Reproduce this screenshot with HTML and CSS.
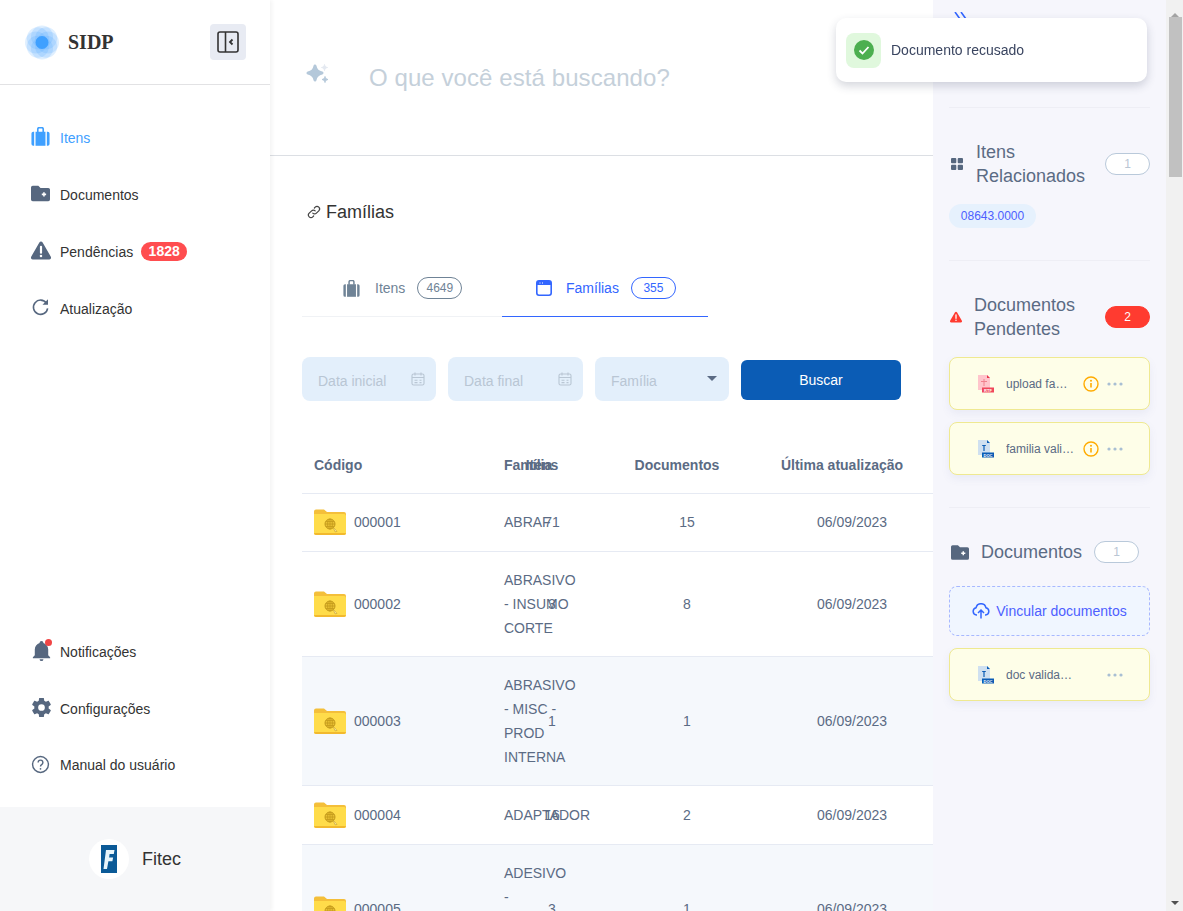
FILE: index.html
```html
<!DOCTYPE html>
<html lang="pt-BR">
<head>
    <meta charset="UTF-8">
    <meta name="viewport" content="width=device-width, initial-scale=1.0">
    <title>SIDP</title>
    <link rel="stylesheet" href="styles.css">
</head>
<body>
    <svg class="sprite" aria-hidden="true">
        <symbol id="i-bag" viewBox="1.5 1.5 21 20.5">
            <path d="M6.500 6.500h11V22h-11z" fill="currentColor"/>
            <path d="M2 8.500a2 2 0 0 1 2-2h1V22H4a2 2 0 0 1-2-2zM22 8.500a2 2 0 0 0-2-2h-1V22h1a2 2 0 0 0 2-2z" fill="currentColor"/>
            <path d="M9 7V3.500a1.500 1.500 0 0 1 1.500-1.500h3A1.500 1.500 0 0 1 15 3.500V7" fill="none" stroke="currentColor" stroke-width="1.800"/>
        </symbol>
        <symbol id="i-folder-plus" viewBox="1 3 22 18">
            <path d="M3 3h6.500l2.500 2.500h9a2 2 0 0 1 2 2V19a2 2 0 0 1-2 2H3a2 2 0 0 1-2-2V5a2 2 0 0 1 2-2z" fill="currentColor"/>
            <path d="M13.500 13h5M16 10.500v5" stroke="#fff" stroke-width="1.800"/>
        </symbol>
        <symbol id="i-warning" viewBox="1 2 22 20">
            <path d="M10.200 3.200a2.100 2.100 0 0 1 3.600 0l9 15.600a2.100 2.100 0 0 1-1.800 3.200H3a2.100 2.100 0 0 1-1.800-3.200z" fill="currentColor"/>
            <path d="M12 8v6.500" stroke="#fff" stroke-width="2.400" stroke-linecap="round"/>
            <circle cx="12" cy="18" r="1.400" fill="#fff"/>
        </symbol>
        <symbol id="i-folder" viewBox="0 0 32 26">
            <path d="M0 2.500A2 2 0 0 1 2 .5h8l3 2.500h17a2 2 0 0 1 2 2V10H0z" fill="#f4bf3a"/>
            <path d="M0 5h30a2 2 0 0 1 2 2v17a2 2 0 0 1-2 2H2a2 2 0 0 1-2-2z" fill="#ffdc4a"/>
            <path d="M0 24h32a2 2 0 0 1-2 2H2a2 2 0 0 1-2-2z" fill="#f2b92e"/>
            <circle cx="16" cy="15" r="5" fill="#eac233" stroke="#c49a1c" stroke-width="1"/>
            <path d="M11 15h10M16 10v10M12 12.500h8M12 17.500h8" stroke="#c49a1c" stroke-width=".8"/>
            <ellipse cx="16" cy="15" rx="2.400" ry="5" fill="none" stroke="#c49a1c" stroke-width=".8"/>
            <path d="M19 18l4 4.500-2 .3z" fill="#fff3b8" stroke="#c49a1c" stroke-width=".6"/>
        </symbol>
        <symbol id="i-calendar" viewBox="0 0 14 14">
            <rect x="1" y="2" width="12" height="11" rx="1.600" fill="none" stroke="currentColor" stroke-width="1.100"/>
            <path d="M1 5.500h12M4 .5v3M10 .5v3M3.500 8.200h3M8.500 8.200h2M3.500 10.600h3M8.500 10.600h2" stroke="currentColor" stroke-width="1.100" fill="none"/>
        </symbol>
        <symbol id="i-info" viewBox="0 0 16 16">
            <circle cx="8" cy="8" r="7" fill="none" stroke="#ffab00" stroke-width="1.400"/>
            <path d="M8 7v4.600" stroke="#ffab00" stroke-width="1.600"/>
            <circle cx="8" cy="4.800" r="1" fill="#ffab00"/>
        </symbol>
        <symbol id="i-dots" viewBox="0 0 16 4">
            <circle cx="2" cy="2" r="1.600" fill="#a9bfd3"/>
            <circle cx="8" cy="2" r="1.600" fill="#a9bfd3"/>
            <circle cx="14" cy="2" r="1.600" fill="#a9bfd3"/>
        </symbol>
    </svg>

    <div class="shell">
        <aside class="sidebar">
            <div class="brand">
                <svg class="brand-logo" viewBox="0 0 34 34">
                    <g fill="#3fa0ff" fill-opacity=".17">
                        <circle cx="17" cy="11" r="11"/>
                        <circle cx="17" cy="23" r="11"/>
                        <circle cx="11" cy="17" r="11"/>
                        <circle cx="23" cy="17" r="11"/>
                        <circle cx="12.800" cy="12.800" r="11"/>
                        <circle cx="21.200" cy="12.800" r="11"/>
                        <circle cx="12.800" cy="21.200" r="11"/>
                        <circle cx="21.200" cy="21.200" r="11"/>
                    </g>
                    <circle cx="17" cy="17" r="6.500" fill="#3fa0ff"/>
                </svg>
                <span class="brand-name">SIDP</span>
                <button class="collapse-btn" aria-label="Recolher menu">
                    <svg width="22" height="22" viewBox="0 0 22 22" fill="none" stroke="#333" stroke-width="1.600">
                        <rect x="1" y="1" width="20" height="20" rx="2"/>
                        <path d="M8.500 1v20"/>
                        <path d="M15.500 8.500L13 11l2.500 2.500" stroke-width="1.800"/>
                    </svg>
                </button>
            </div>

            <nav class="nav">
                <a class="nav-item active">
                    <svg class="nav-icon"><use href="#i-bag"/></svg>
                    Itens
                </a>
                <a class="nav-item">
                    <svg class="nav-icon"><use href="#i-folder-plus"/></svg>
                    Documentos
                </a>
                <a class="nav-item">
                    <svg class="nav-icon nav-icon-warn"><use href="#i-warning"/></svg>
                    Pendências
                    <span class="nav-badge">1828</span>
                </a>
                <a class="nav-item">
                    <svg class="nav-icon" viewBox="0 0 24 24" fill="none" stroke="currentColor" stroke-width="2">
                        <path d="M19.500 6.500A9 9 0 1 0 21 13"/>
                        <path d="M21.500 1.500v7h-7" fill="currentColor" stroke="none"/>
                    </svg>
                    Atualização
                </a>
            </nav>

            <nav class="nav nav-bottom">
                <a class="nav-item">
                    <span class="bell">
                        <svg class="nav-icon nav-icon-lg" viewBox="0 0 24 24"><path fill="currentColor" d="M21,19V20H3V19L5,17V11C5,7.9 7.03,5.17 10,4.29C10,4.19 10,4.1 10,4A2,2 0 0,1 12,2A2,2 0 0,1 14,4C14,4.1 14,4.19 14,4.29C16.97,5.17 19,7.9 19,11V17L21,19M14,21A2,2 0 0,1 12,23A2,2 0 0,1 10,21"/></svg>
                        <span class="bell-dot"></span>
                    </span>
                    Notificações
                </a>
                <a class="nav-item">
                    <svg class="nav-icon nav-icon-lg" viewBox="0 0 24 24"><path fill="currentColor" d="M12,15.5A3.5,3.5 0 0,1 8.5,12A3.5,3.5 0 0,1 12,8.5A3.5,3.5 0 0,1 15.5,12A3.5,3.5 0 0,1 12,15.5M19.43,12.97C19.47,12.65 19.5,12.33 19.5,12C19.5,11.67 19.47,11.34 19.43,11L21.54,9.37C21.73,9.22 21.78,8.95 21.66,8.73L19.66,5.27C19.54,5.05 19.27,4.96 19.05,5.05L16.56,6.05C16.04,5.66 15.5,5.32 14.87,5.07L14.5,2.42C14.46,2.18 14.25,2 14,2H10C9.75,2 9.54,2.18 9.5,2.42L9.13,5.07C8.5,5.32 7.96,5.66 7.44,6.05L4.95,5.05C4.73,4.96 4.46,5.05 4.34,5.27L2.34,8.73C2.21,8.95 2.27,9.22 2.46,9.37L4.57,11C4.53,11.34 4.5,11.67 4.5,12C4.5,12.33 4.53,12.65 4.57,12.97L2.46,14.63C2.27,14.78 2.21,15.05 2.34,15.27L4.34,18.73C4.46,18.95 4.73,19.03 4.95,18.95L7.44,17.94C7.96,18.34 8.5,18.68 9.13,18.93L9.5,21.58C9.54,21.82 9.75,22 10,22H14C14.25,22 14.46,21.82 14.5,21.58L14.87,18.93C15.5,18.67 16.04,18.34 16.56,17.94L19.05,18.95C19.27,19.03 19.54,18.95 19.66,18.73L21.66,15.27C21.78,15.05 21.73,14.78 21.54,14.63L19.43,12.97Z"/></svg>
                    Configurações
                </a>
                <a class="nav-item nav-item-last">
                    <svg class="nav-icon" viewBox="0 0 24 24" fill="none" stroke="currentColor" stroke-width="1.800">
                        <circle cx="12" cy="12" r="10"/>
                        <path d="M9 9.500a3 3 0 1 1 4.500 2.600c-1 .6-1.500 1.100-1.500 2.400"/>
                        <circle cx="12" cy="17.500" r="1.100" fill="currentColor" stroke="none"/>
                    </svg>
                    Manual do usuário
                </a>
            </nav>

            <div class="org">
                <span class="org-logo">
                    <svg width="16" height="28" viewBox="0 0 16 28">
                        <rect width="16" height="28" fill="#0b5a97"/>
                        <path d="M5 5h8.500l-.7 4H8.600l-.5 3.500h4l-.7 3.700h-4L6 24H2.500z" fill="#e8f5fb"/>
                    </svg>
                </span>
                <span class="org-name">Fitec</span>
            </div>
        </aside>

        <main class="main">
            <div class="search">
                <svg class="search-icon" viewBox="0 0 26 22">
                    <path d="M9 2c.8 4.300 2.700 6.200 7 7-4.300.8-6.200 2.700-7 7-.8-4.300-2.700-6.200-7-7 4.300-.8 6.200-2.700 7-7z" fill="#b4c8da" stroke="#b4c8da" stroke-width="3" stroke-linejoin="round"/>
                    <path d="M18.500 .5c.3 1.800 1.200 2.700 3 3-1.800.3-2.700 1.200-3 3-.3-1.800-1.200-2.700-3-3 1.800-.3 2.700-1.200 3-3z" fill="#e4e9f1" stroke="#e4e9f1"/>
                    <path d="M19 12.500c.3 1.800 1.200 2.700 3 3-1.800.3-2.700 1.200-3 3-.3-1.800-1.200-2.700-3-3 1.800-.3 2.700-1.200 3-3z" fill="#b4c8da" stroke="#b4c8da"/>
                </svg>
                <span class="search-text">O que você está buscando?</span>
            </div>

            <div class="content">
                <h2 class="page-title">
                    <svg width="14" height="14" viewBox="0 0 14 14" fill="none" stroke="#444" stroke-width="1.200" stroke-linecap="round">
                        <path d="M5.800 8.200a2.500 2.500 0 0 0 3.600 0l2.400-2.400a2.500 2.500 0 0 0-3.600-3.600l-.8.8"/>
                        <path d="M8.200 5.800a2.500 2.500 0 0 0-3.600 0L2.200 8.200a2.500 2.500 0 0 0 3.600 3.600l.8-.8"/>
                    </svg>
                    Famílias
                </h2>

                <div class="tabs">
                    <div class="tab">
                        <svg class="tab-icon"><use href="#i-bag"/></svg>
                        Itens
                        <span class="tab-count">4649</span>
                    </div>
                    <div class="tab tab-active">
                        <svg class="tab-icon" viewBox="0 0 16 16">
                            <rect x=".8" y=".8" width="14.400" height="14.400" rx="2.200" fill="#fff" stroke="currentColor" stroke-width="1.600"/>
                            <path d="M1 2.500a1.500 1.500 0 0 1 1.500-1.500h11A1.500 1.500 0 0 1 15 2.500V5H1z" fill="currentColor"/>
                            <path d="M3.500 3h1M6 3h1" stroke="#fff"/>
                        </svg>
                        Famílias
                        <span class="tab-count">355</span>
                    </div>
                </div>

                <div class="filters">
                    <div class="field">
                        Data inicial
                        <svg class="field-icon"><use href="#i-calendar"/></svg>
                    </div>
                    <div class="field field-final">
                        Data final
                        <svg class="field-icon"><use href="#i-calendar"/></svg>
                    </div>
                    <div class="field">
                        Família
                        <span class="caret"></span>
                    </div>
                    <button class="search-btn">Buscar</button>
                </div>

                <div class="table">
                    <div class="row row-head">
                        <div class="cell-code">Código</div>
                        <div class="cell-family">Família</div>
                        <div class="cell-center cell-items">Itens</div>
                        <div class="cell-center">Documentos</div>
                        <div class="cell-center cell-last">Última atualização</div>
                    </div>
                    <div class="row">
                        <div class="cell-code"><svg class="folder"><use href="#i-folder"/></svg>000001</div>
                        <div class="cell-family">ABRAF</div>
                        <div class="cell-center cell-items">71</div>
                        <div class="cell-center">15</div>
                        <div class="cell-center">06/09/2023</div>
                    </div>
                    <div class="row">
                        <div class="cell-code"><svg class="folder"><use href="#i-folder"/></svg>000002</div>
                        <div class="cell-family">ABRASIVO - INSUMO CORTE</div>
                        <div class="cell-center cell-items">3</div>
                        <div class="cell-center">8</div>
                        <div class="cell-center">06/09/2023</div>
                    </div>
                    <div class="row row-alt">
                        <div class="cell-code"><svg class="folder"><use href="#i-folder"/></svg>000003</div>
                        <div class="cell-family">ABRASIVO - MISC - PROD INTERNA</div>
                        <div class="cell-center cell-items">1</div>
                        <div class="cell-center">1</div>
                        <div class="cell-center">06/09/2023</div>
                    </div>
                    <div class="row">
                        <div class="cell-code"><svg class="folder"><use href="#i-folder"/></svg>000004</div>
                        <div class="cell-family">ADAPTADOR</div>
                        <div class="cell-center cell-items">16</div>
                        <div class="cell-center">2</div>
                        <div class="cell-center">06/09/2023</div>
                    </div>
                    <div class="row row-alt">
                        <div class="cell-code"><svg class="folder"><use href="#i-folder"/></svg>000005</div>
                        <div class="cell-family">ADESIVO - CONSTRUCAO CIVIL</div>
                        <div class="cell-center cell-items">3</div>
                        <div class="cell-center">1</div>
                        <div class="cell-center">06/09/2023</div>
                    </div>
                </div>
            </div>
        </main>

        <aside class="panel">
            <div class="panel-top">
                <svg width="14" height="14" viewBox="0 0 14 14" fill="none" stroke="#3366ff" stroke-width="1.600">
                    <path d="M1 0l5 7-5 7M7 0l5 7-5 7"/>
                </svg>
            </div>

            <section class="panel-section">
                <div class="panel-head">
                    <svg class="head-icon-grid" viewBox="0 0 12 12" fill="#56677f">
                        <rect width="5.300" height="5.300" rx="1"/>
                        <rect x="6.700" width="5.300" height="5.300" rx="1"/>
                        <rect y="6.700" width="5.300" height="5.300" rx="1"/>
                        <rect x="6.700" y="6.700" width="5.300" height="5.300" rx="1"/>
                    </svg>
                    <span class="panel-title">Itens Relacionados</span>
                    <span class="count">1</span>
                </div>
                <span class="chip">08643.0000</span>
            </section>

            <section class="panel-section">
                <div class="panel-head">
                    <svg class="head-icon-warn"><use href="#i-warning"/></svg>
                    <span class="panel-title">Documentos Pendentes</span>
                    <span class="count count-red">2</span>
                </div>
                <div class="doc-list">
                    <div class="doc">
                        <svg class="doc-icon" viewBox="0 0 17 18">
                            <path d="M1 0h9l3 3v12H1z" fill="#ffc5cc"/>
                            <path d="M10 0l3 3h-3z" fill="#e8344a"/>
                            <path d="M7 4v7M4 6.500h6" stroke="#f0808e" stroke-width="1"/>
                            <rect x="5" y="12.500" width="12" height="5" fill="#f0475c"/>
                            <text x="11" y="16.500" class="doc-ext">RTF</text>
                        </svg>
                        <span class="doc-name">upload familia rtf</span>
                        <svg class="doc-info"><use href="#i-info"/></svg>
                        <svg class="doc-dots"><use href="#i-dots"/></svg>
                    </div>
                    <div class="doc">
                        <svg class="doc-icon" viewBox="0 0 17 18">
                            <path d="M1 0h9l3 3v12H1z" fill="#cfe0f0"/>
                            <path d="M10 0l3 3h-3z" fill="#0b5cb5"/>
                            <path d="M7 5.500V11M5.200 5.500h3.600" stroke="#0b5cb5" stroke-width="1.200"/>
                            <rect x="5" y="12.500" width="12" height="5" fill="#0b5cb5"/>
                            <text x="11" y="16.500" class="doc-ext">DOC</text>
                        </svg>
                        <span class="doc-name doc-name-wide">familia validacao</span>
                        <svg class="doc-info"><use href="#i-info"/></svg>
                        <svg class="doc-dots"><use href="#i-dots"/></svg>
                    </div>
                </div>
            </section>

            <section class="panel-section panel-section-last">
                <div class="panel-head panel-head-docs">
                    <svg class="head-icon-folder"><use href="#i-folder-plus"/></svg>
                    <span class="panel-title panel-title-inline">Documentos</span>
                    <span class="count">1</span>
                </div>
                <div class="upload">
                    <svg width="18" height="16" viewBox="0 0 18 16" fill="none" stroke="#3366ff" stroke-width="1.500">
                        <path d="M5 12H4.500a3.700 3.700 0 0 1-.4-7.300 5 5 0 0 1 9.800 0A3.700 3.700 0 0 1 13.500 12H13"/>
                        <path d="M9 15.500V7.500M6 10l3-3 3 3"/>
                    </svg>
                    Vincular documentos
                </div>
                <div class="doc">
                    <svg class="doc-icon" viewBox="0 0 17 18">
                        <path d="M1 0h9l3 3v12H1z" fill="#cfe0f0"/>
                        <path d="M10 0l3 3h-3z" fill="#0b5cb5"/>
                        <path d="M7 5.500V11M5.200 5.500h3.600" stroke="#0b5cb5" stroke-width="1.200"/>
                        <rect x="5" y="12.500" width="12" height="5" fill="#0b5cb5"/>
                        <text x="11" y="16.500" class="doc-ext">DOC</text>
                    </svg>
                    <span class="doc-name doc-name-wide">doc validacao final</span>
                    <svg class="doc-info"></svg>
                    <svg class="doc-dots"><use href="#i-dots"/></svg>
                </div>
            </section>
        </aside>

        <div class="scrollbar" aria-hidden="true">
            <span class="scroll-arrow"></span>
            <span class="scroll-thumb"></span>
            <span class="scroll-arrow scroll-arrow-down"></span>
        </div>
    </div>

    <div class="toast">
        <span class="toast-icon">
            <svg width="20" height="20" viewBox="0 0 20 20">
                <circle cx="10" cy="10" r="10" fill="#4caf50"/>
                <path d="M5.500 10.500l3 3 6-6.500" fill="none" stroke="#fff" stroke-width="1.800"/>
            </svg>
        </span>
        Documento recusado
    </div>
</body>
</html>
```

FILE: styles.css
```css
* {
    box-sizing: border-box;
}
html, body {
    margin: 0;
    height: 100%;
}
body {
    font-family: "Liberation Sans", Arial, sans-serif;
    font-size: 14px;
    color: #5b6b84;
    background: #fff;
    overflow: hidden;
}
.sprite {
    display: none;
}
.shell {
    display: flex;
    height: 100vh;
    overflow: hidden;
}

/* menu lateral */
.sidebar {
    width: 270px;
    flex-shrink: 0;
    display: flex;
    flex-direction: column;
    background: #fff;
    box-shadow: 2px 0 4px rgba(0,0,0,.05);
    z-index: 2;
}
.brand {
    height: 85px;
    flex-shrink: 0;
    display: flex;
    align-items: center;
    padding: 0 24px 0 25px;
    border-bottom: 1px solid #e2e2e4;
}
.brand-logo {
    width: 34px;
    height: 35px;
}
.brand-name {
    margin-left: 9px;
    font-family: "Liberation Serif", "Times New Roman", serif;
    font-size: 20px;
    font-weight: bold;
    color: #333;
}
.collapse-btn {
    margin-left: auto;
    width: 36px;
    height: 36px;
    padding: 0;
    display: flex;
    align-items: center;
    justify-content: center;
    background: #e8ebf3;
    border: none;
    border-radius: 4px;
}
.nav {
    padding-top: 24px;
}
.nav-bottom {
    margin-top: auto;
    padding: 0 0 14px;
}
.nav-item {
    height: 57px;
    display: flex;
    align-items: center;
    padding-left: 31px;
    color: #333;
    font-size: 14px;
}
.nav-item-last {
    height: 56px;
}
.nav-item .nav-icon {
    width: 19px;
    height: 19px;
    margin-right: 10px;
    margin-top: -2px;
    color: #56677f;
    flex-shrink: 0;
}
.nav-item .nav-icon-warn {
    width: 20px;
    margin-right: 9px;
}
.nav-item .nav-icon-lg {
    width: 23px;
    height: 23px;
    margin: -2px 7px 0 -1px;
}
.nav-item.active,
.nav-item.active .nav-icon {
    color: #3fa0ff;
}
.nav-badge {
    width: 46px;
    height: 19px;
    margin-left: 8px;
    line-height: 18px;
    text-align: center;
    border-radius: 10px;
    background: #ff4d4f;
    color: #fff;
    font-weight: bold;
}
.bell {
    position: relative;
    display: flex;
}
.bell-dot {
    position: absolute;
    top: -2px;
    left: 14px;
    width: 7px;
    height: 7px;
    border-radius: 50%;
    background: #f04545;
}
.org {
    height: 104px;
    flex-shrink: 0;
    display: flex;
    align-items: center;
    padding-left: 89px;
    background: #f6f7f9;
}
.org-logo {
    width: 40px;
    height: 40px;
    display: flex;
    align-items: center;
    justify-content: center;
    background: #fff;
    border-radius: 50%;
}
.org-name {
    margin-left: 13px;
    font-size: 18px;
    color: #333;
}

/* area central */
.main {
    width: 663px;
    flex-shrink: 0;
    background: #fff;
    overflow: hidden;
}
.search {
    height: 156px;
    display: flex;
    align-items: center;
    padding: 0 0 0 36px;
    border-bottom: 1px solid #dcdfe4;
}
.search-icon {
    width: 26px;
    height: 22px;
    margin-bottom: 6px;
}
.search-text {
    margin-left: 37px;
    font-size: 24px;
    letter-spacing: .08px;
    color: #c5d0da;
}
.content {
    padding: 45px 0 0 32px;
}
.page-title {
    display: flex;
    align-items: center;
    gap: 5px;
    margin: 0 0 0 5px;
    height: 22px;
    font-size: 18px;
    font-weight: normal;
    color: #333;
}
.tabs {
    display: flex;
    width: 406px;
    margin-top: 38px;
}
.tab {
    height: 56px;
    width: 200px;
    display: flex;
    align-items: center;
    padding: 0 0 1px 41px;
    border-bottom: 1px solid #f0f2f5;
    color: #6f8396;
}
.tab-active {
    width: 206px;
    padding-left: 34px;
    color: #3366ff;
    border-bottom-color: #3366ff;
}
.tab-icon {
    width: 17px;
    height: 17px;
    margin-right: 15px;
}
.tab-active .tab-icon {
    width: 16px;
    height: 16px;
    margin-right: 14px;
}
.tab-count {
    width: 45px;
    height: 22px;
    margin-left: 12px;
    line-height: 20px;
    text-align: center;
    font-size: 12px;
    border: 1px solid currentColor;
    border-radius: 11px;
}
.filters {
    display: flex;
    align-items: center;
    gap: 12px;
    margin-top: 40px;
    width: 600px;
}
.field {
    height: 44px;
    width: 134px;
    display: flex;
    align-items: center;
    justify-content: space-between;
    padding: 3px 11px 0 16px;
    background: #e3effb;
    border-radius: 8px;
    color: #b9c6d4;
}
.field-final {
    width: 135px;
}
.field-icon {
    width: 14px;
    height: 14px;
    margin-top: -4px;
    color: #b9c6d4;
}
.caret {
    margin: -4px 1px 0 0;
    border-left: 5px solid transparent;
    border-right: 5px solid transparent;
    border-top: 5px solid #5b6b84;
}
.search-btn {
    width: 160px;
    height: 40px;
    margin-top: 2px;
    background: #0b5cb5;
    color: #fff;
    border: none;
    border-radius: 6px;
    font-family: inherit;
    font-size: 14px;
}

/* tabela */
.table {
    margin-top: 36px;
    width: 631px;
}
.row {
    display: grid;
    grid-template-columns: 202px 96px 174px 156px;
    align-items: center;
    min-height: 58.5px;
    padding: 16px 0;
    line-height: 24px;
    border-bottom: 1px solid #e6eaf3;
}
.row > div {
    grid-row: 1;
}
.row-alt {
    background: #f5f8fc;
}
.row-head {
    min-height: 56.6px;
    padding: 15.8px 0;
    font-weight: bold;
}
.cell-code {
    display: flex;
    align-items: center;
    padding-left: 12px;
    grid-column: 1;
}
.folder {
    width: 32px;
    height: 26px;
    margin: -1px 8px -1px 0;
}
.cell-family {
    grid-column: 2;
    width: 70px;
}
.cell-center {
    text-align: center;
}
.cell-items {
    grid-column: 2;
}
.row-head .cell-center {
    padding-right: 20px;
}
.row-head .cell-last {
    white-space: nowrap;
}

/* painel direito */
.panel {
    width: 233px;
    flex-shrink: 0;
    padding: 0 16px;
    background: #f6f6fc;
}
.panel-top {
    height: 108px;
    padding: 12px 0 0 5px;
    border-bottom: 1px solid #eeeef5;
}
.panel-section {
    padding: 32px 0;
    border-bottom: 1px solid #eeeef5;
}
.panel-section-last {
    border-bottom: none;
}
.panel-head {
    display: flex;
    align-items: center;
    font-size: 18px;
    line-height: 24px;
    margin-bottom: 16px;
}
.panel-head-docs {
    margin-bottom: 22px;
}
.panel-title {
    flex: 1;
}
.panel-title-inline {
    flex: none;
    margin-right: 12px;
}
.head-icon-grid {
    width: 12px;
    height: 12px;
    margin: 0 13px 0 2px;
}
.head-icon-warn {
    width: 12px;
    height: 12px;
    margin: 0 12px 0 1px;
    color: #ff3b30;
    flex-shrink: 0;
}
.head-icon-folder {
    width: 18px;
    height: 15px;
    margin: 0 12px 0 2px;
    color: #56677f;
}
.count {
    width: 45px;
    height: 22px;
    flex-shrink: 0;
    line-height: 20px;
    text-align: center;
    font-size: 12px;
    color: #b9c6d4;
    background: #fff;
    border: 1px solid #b9c9da;
    border-radius: 11px;
}
.count-red {
    background: #ff3b30;
    border-color: #ff3b30;
    color: #fff;
}
.chip {
    display: inline-block;
    width: 87px;
    height: 24px;
    line-height: 24px;
    text-align: center;
    font-size: 12px;
    color: #4d5fff;
    background: #e6f1fd;
    border-radius: 12px;
}
.doc-list {
    display: flex;
    flex-direction: column;
    gap: 12px;
}
.doc {
    height: 53px;
    display: flex;
    align-items: center;
    padding: 0 26px 0 27px;
    background: #fefee8;
    border: 1px solid #efe991;
    border-radius: 8px;
    box-shadow: 0 4px 8px rgba(90,100,160,.08);
}
.doc-icon {
    width: 17px;
    height: 18px;
    flex-shrink: 0;
}
.doc-ext {
    font-size: 4px;
    font-weight: bold;
    fill: #fff;
    text-anchor: middle;
}
.doc-name {
    width: 62px;
    margin-left: 12px;
    font-size: 12px;
    white-space: nowrap;
    overflow: hidden;
    text-overflow: ellipsis;
}
.doc-name-wide {
    width: 70px;
}
.doc-info {
    width: 16px;
    height: 16px;
    margin-left: auto;
    flex-shrink: 0;
}
.doc-dots {
    width: 16px;
    height: 4px;
    margin-left: 8px;
    flex-shrink: 0;
}
.upload {
    height: 50px;
    margin-bottom: 12px;
    display: flex;
    align-items: center;
    justify-content: center;
    gap: 6px;
    font-size: 14px;
    color: #4d5fff;
    background: #f0f6ff;
    border: 1px dashed #a8b8ff;
    border-radius: 8px;
}

/* barra de rolagem */
.scrollbar {
    width: 17px;
    flex-shrink: 0;
    display: flex;
    flex-direction: column;
    align-items: center;
    background: #f1f1f1;
}
.scroll-arrow {
    margin-top: 6px;
    height: 11px;
    border-left: 4px solid transparent;
    border-right: 4px solid transparent;
    border-bottom: 4px solid #a3a3a3;
    width: 0;
}
.scroll-arrow-down {
    margin: auto 0 6px;
    border-bottom: none;
    border-top: 4px solid #505050;
    height: 4px;
}
.scroll-thumb {
    width: 13px;
    height: 160px;
    margin-left: 2px;
    background: #c1c1c1;
}

/* aviso */
.toast {
    position: fixed;
    top: 18px;
    left: 836px;
    width: 311px;
    height: 64px;
    display: flex;
    align-items: center;
    gap: 10px;
    padding: 0 10px;
    background: #fff;
    border-radius: 10px;
    box-shadow: 0 4px 10px rgba(40,50,80,.2);
    color: #3a4560;
    z-index: 5;
}
.toast-icon {
    width: 35px;
    height: 35px;
    display: flex;
    align-items: center;
    justify-content: center;
    background: #e0f8dd;
    border-radius: 8px;
}
```
